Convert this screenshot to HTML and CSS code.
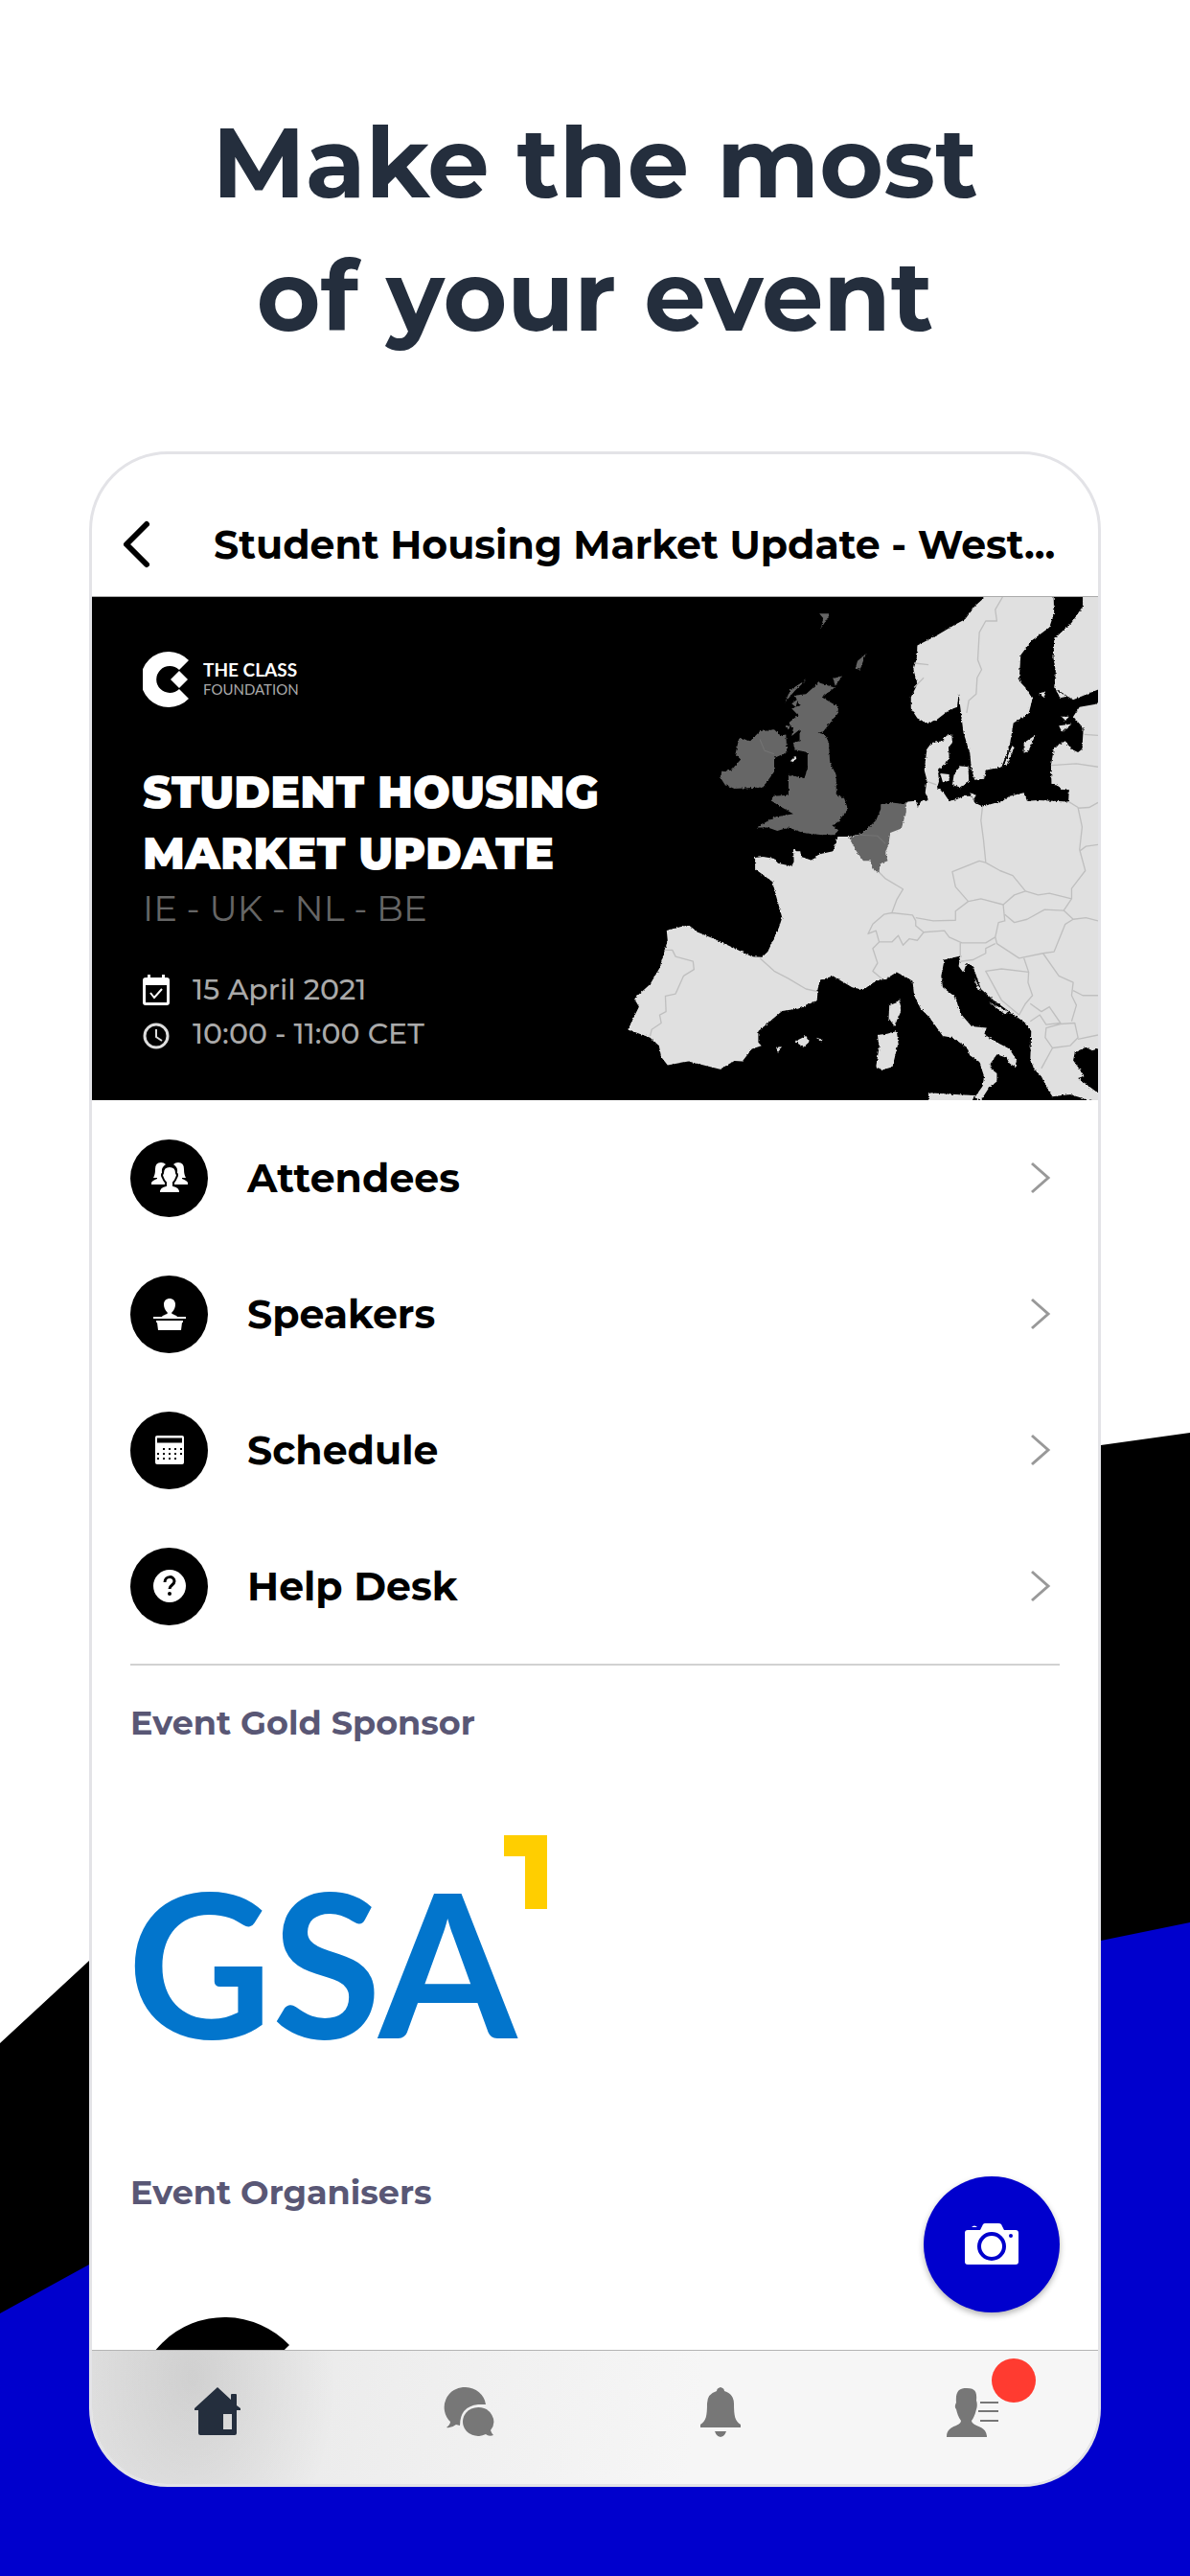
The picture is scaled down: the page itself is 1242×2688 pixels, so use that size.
FILE: index.html
```html
<!DOCTYPE html>
<html lang="en">
<head>
    <meta charset="UTF-8">
    <meta name="viewport" content="width=device-width, initial-scale=1.0">
    <title>Make the most of your event</title>
    <link rel="stylesheet" href="styles.css">
</head>
<body>
<div class="page">
    <!-- background waves -->
    <svg class="waves" viewBox="0 0 1242 2688" preserveAspectRatio="none" aria-hidden="true">
        <path fill="#000" d="M0 2132L93 2046Q520 1620 1149 1508L1242 1495V2688H0Z"/>
        <path fill="#0000cd" d="M0 2414L93 2363Q560 2130 1149 2025L1242 2006V2688H0Z"/>
    </svg>

    <h1 class="headline">Make the most<br>of your event</h1>

    <div class="phone">
        <header class="topbar">
            <button class="back" type="button" aria-label="Back">
                <svg width="34" height="54" viewBox="0 0 34 54"><path d="M27 6L6 27L27 48" fill="none" stroke="#000" stroke-width="6" stroke-linecap="round" stroke-linejoin="round"/></svg>
            </button>
            <h2 class="title">Student Housing Market Update - West...</h2>
        </header>

        <main class="content">
            <section class="banner">
                <div class="info">
                    <div class="logo">
                        <svg width="50" height="58" viewBox="0 0 50 58"><path fill="#fff" d="M48 9A29 29 0 1 0 48 49L38 39A14 14 0 1 1 38 19Z"/><path fill="#fff" d="M38 20L47 29L38 38L29 29Z"/></svg>
                        <p class="logo_txt"><b>THE CLASS</b><span>FOUNDATION</span></p>
                    </div>
                    <h3 class="event">STUDENT HOUSING<br>MARKET UPDATE</h3>
                    <p class="countries">IE - UK - NL - BE</p>
                    <ul class="when">
                        <li>
                            <svg width="28" height="32" viewBox="0 0 28 32"><path fill="#fff" fill-rule="evenodd" d="M5 0h3v3h12V0h3v3h2a3 3 0 0 1 3 3v23a3 3 0 0 1-3 3H3a3 3 0 0 1-3-3V6a3 3 0 0 1 3-3h2zM3 11v18h22V11z"/><path d="M8 19l4 5 8-9" fill="none" stroke="#fff" stroke-width="2"/></svg>
                            15 April 2021
                        </li>
                        <li>
                            <svg width="28" height="32" viewBox="0 0 28 32"><circle cx="14" cy="18" r="12" fill="none" stroke="#ddd" stroke-width="3"/><path d="M14 11v8l6 4" fill="none" stroke="#ddd" stroke-width="2"/></svg>
                            10:00 - 11:00 CET
                        </li>
                    </ul>
                </div>
                <!-- map of western europe -->
                <svg class="map" viewBox="0 11 1518 1552" preserveAspectRatio="none" aria-hidden="true">
                    <filter id="coast" x="0" y="0" width="100%" height="100%">
                        <feTurbulence type="fractalNoise" baseFrequency="0.14" numOctaves="2" seed="4"/>
                        <feDisplacementMap in="SourceGraphic" scale="9" xChannelSelector="R" yChannelSelector="G"/>
                    </filter>
                    <g filter="url(#coast)">
                        <g fill="#e0e0e0">
                            <path d="M440 815L465 812 500 818 512 832 540 838 556 842 562 825 560 788 570 795 582 795 585 812 620 824 640 805 685 795 692 775 700 750 735 750 775 742 820 705 840 670 860 660 912 650 920 642 945 640 952 660 962 640 985 638 975 615 980 575 972 545 980 480 995 460 1030 455 1042 438 1058 435 1060 460 1048 475 1050 505 1040 525 1015 545 1018 580 1012 600 1030 610 1050 640 1075 635 1095 625 1120 625 1130 645 1155 657 1218 640 1240 625 1285 615 1295 640 1330 638 1425 642 1427 605 1405 605 1390 592 1372 590 1370 530 1380 475 1415 455 1435 480 1455 490 1468 480 1472 415 1440 380 1460 350 1530 338 1530 1400 1500 1410 1480 1400 1445 1415 1440 1440 1475 1488 1455 1495 1530 1550 1530 1575 1430 1545 1375 1552 1360 1530 1340 1490 1320 1470 1305 1440 1308 1350 1290 1325 1240 1290 1190 1255 1150 1220 1125 1150 1105 1140 1095 1170 1080 1150 1085 1118 1035 1130 1025 1180 1030 1215 1070 1245 1085 1295 1120 1335 1168 1340 1160 1360 1200 1385 1240 1405 1262 1440 1258 1460 1240 1450 1230 1432 1200 1422 1180 1450 1180 1465 1200 1480 1200 1505 1175 1525 1150 1563 1130 1555 1155 1520 1160 1490 1145 1445 1115 1425 1105 1400 1060 1370 1030 1365 990 1310 960 1280 940 1240 935 1195 885 1168 850 1190 820 1195 780 1222 745 1215 685 1180 645 1192 637 1220 635 1255 580 1280 525 1288 450 1350 450 1385 460 1395 430 1405 400 1443 375 1442 330 1468 230 1443 165 1455 145 1430 138 1395 110 1370 40 1345 75 1275 60 1250 110 1205 140 1155 165 1070 162 1040 230 1022 260 1045 310 1065 370 1092 430 1120 462 1122 480 1105 515 1030 525 1000 505 930 495 890 440 850Z"/>
                            <path d="M1175 0L1130 40 1100 80 1070 95 1010 130 950 160 948 200 938 235 950 280 930 320 930 355 950 385 980 400 1010 390 1050 360 1075 350 1080 310 1085 350 1095 430 1115 490 1120 540 1130 575 1160 572 1165 545 1215 535 1240 470 1252 400 1300 370 1312 325 1290 290 1270 270 1275 190 1310 145 1365 105 1380 60 1378 0Z"/>
                            <path d="M1470 0L1470 40 1435 90 1380 140 1378 200 1385 240 1380 290 1440 328 1530 292V0Z"/>
                            <path d="M1065 560L1085 532 1110 535 1112 580 1085 600 1060 590ZM1022 555L1050 558 1050 578 1030 582ZM1285 460L1320 438 1300 485 1285 492ZM1248 470L1255 475 1230 532 1222 530ZM895 1250L898 1290 878 1335 860 1310 862 1270 885 1262ZM885 1350L890 1385 872 1460 840 1470 820 1460 830 1400 825 1362 855 1358ZM565 1382L600 1365 612 1382 592 1400ZM632 1370L652 1376 648 1384ZM506 1400L524 1398 512 1415ZM985 1540L1070 1545 1130 1548 1118 1575 985 1575ZM1395 408L1435 403 1405 428ZM1403 380L1427 380 1416 392ZM1330 308L1352 302 1350 322ZM1385 298L1420 318 1400 322ZM1115 615L1135 622 1128 638ZM1130 1185L1150 1225 1140 1222ZM1175 1260L1235 1290 1225 1298Z"/>
                        </g>
                        <g fill="#666">
                            <path d="M640 275L690 290 650 320 702 350 700 370 655 425 640 430 660 435 672 460 675 520 695 560 695 620 720 632 732 665 700 705 682 715 702 730 690 745 650 745 590 738 545 722 510 732 480 722 445 722 500 690 560 680 515 655 492 640 495 625 545 622 545 560 595 570 605 540 605 490 565 482 560 460 580 455 580 420 555 440 560 415 545 400 575 375 555 355 580 345 565 315 600 310Z"/>
                            <path d="M455 425L500 420 520 438 537 435 540 490 500 508 500 550 465 598 375 602 345 590 332 570 335 548 365 545 395 512 378 495 390 445 425 455Z"/>
                            <path d="M735 752L775 742 820 700 835 665 835 650 870 645 915 650 915 675 900 725 865 738 860 770 850 800 857 825 832 835 830 860 815 855 800 825 780 825 755 790Z"/>
                            <path d="M602 265L565 300 535 335 550 298ZM788 186L770 235 755 232 762 208ZM685 262L714 255 692 285ZM555 340L575 325 568 350ZM535 410L552 408 545 420ZM642 62L676 62 664 82 648 106 654 76Z"/>
                        </g>
                        <path fill="#e0e0e0" d="M552 515L568 502 570 510 558 520Z"/>
                    </g>
                    <g fill="none" stroke="#bfbfbf" stroke-width="4" stroke-linejoin="round">
                        <path d="M1218 11L1195 50 1200 85 1165 85 1145 120 1140 205 1152 235 1138 260 1135 310 1112 330 1105 368"/>
                        <path d="M155 1100L180 1100 190 1120 245 1135 248 1160 215 1180 190 1235 158 1242 160 1290 140 1300 145 1325 115 1345 110 1365"/>
                        <path d="M455 1125L500 1165 545 1188 600 1220 637 1228"/>
                        <path d="M830 860L850 880 905 912 885 945 870 985 935 992 945 1010 945 1025 970 1045 950 1070 925 1065 905 1085 890 1055 870 1075 830 1075 820 1040 795 1050 810 1020 845 990 870 985M830 1075L810 1095 825 1140 810 1165 840 1190"/>
                        <path d="M1155 657L1150 700 1158 760 1165 828M1145 825L1060 858 1070 905 1110 950 1150 942 1220 960 1255 930 1290 918 1250 870 1210 855 1165 830ZM1110 950L1070 980 1070 1008 1000 1010 945 1000"/>
                        <path d="M970 1045L1035 1040 1050 1060 1090 1078 1165 1078 1195 1060 1205 1015 1225 1010 1220 960M1225 990L1255 1015 1295 1005 1350 975 1410 978 1435 942 1365 925 1330 930 1290 918"/>
                        <path d="M1195 1060L1200 1080 1270 1125 1345 1110 1380 1105 1415 1020 1440 1005 1410 978M1425 642L1455 660 1468 720 1460 790 1478 855 1435 910 1435 942M1440 1005L1480 1000 1518 1010M1518 775L1480 780 1460 795M1370 530L1450 525 1518 535M1455 662L1490 660 1518 645M1475 435L1518 438"/>
                        <path d="M1085 1118L1085 1078M1085 1135L1125 1130 1165 1110 1165 1095 1195 1080M1270 1300L1215 1255 1165 1165 1215 1158 1300 1168 1298 1200 1312 1240 1290 1265ZM1285 1125L1300 1168M1345 1110L1395 1180 1440 1200 1435 1240 1450 1270 1435 1320M1440 1225L1470 1240 1518 1240"/>
                        <path d="M1305 1265L1340 1290 1365 1275 1400 1325 1355 1330 1335 1300 1305 1320M1355 1340L1400 1328 1445 1325 1455 1370 1430 1395 1375 1402 1352 1370ZM1455 1375L1518 1362M1375 1402L1340 1465M940 215L985 220M940 290L970 260M980 580L1010 590"/>
                    </g>
                    <g fill="none" stroke="#747474" stroke-width="3">
                        <path d="M455 450L470 485 500 495M770 745L825 748 850 772"/>
                    </g>
                </svg>
            </section>

            <nav class="menu">
                <a class="row" href="#">
                    <span class="ico"><svg width="40" height="34" viewBox="0 0 40 34"><path fill="#fff" d="M1 24v-2q1-2 6-4v-1H3q2-3 2-9Q5 1 11 1q3 0 5 2q-5 3-4 9q0 4 3 7v5zM39 24v-2q-1-2-6-4v-1h4q-2-3-2-9q0-7-6-7q-3 0-5 2q5 3 4 9q0 4-3 7v5z"/><path fill="#fff" stroke="#000" stroke-width="2" d="M9 33q-1-6 7-8v-3q-2-2-3-5q-2-3 0-5q0-7 7-7t7 7q2 2 0 5q-1 3-3 5v3q8 2 7 8z"/></svg></span>
                    <span class="name">Attendees</span>
                    <svg class="arrow" width="22" height="34" viewBox="0 0 22 34"><path d="M2 2L19 17L2 32"/></svg>
                </a>
                <a class="row" href="#">
                    <span class="ico"><svg width="40" height="34" viewBox="0 0 40 34"><path fill="#fff" d="M3 20h9c1-2 5-2 6-4c-3-3-4-6-4-9c0-8 12-8 12 0c0 3-1 6-4 9c1 2 5 2 6 4h9v2H3zM6 24h28v2h-1l-1 8H8L7 26H6z"/></svg></span>
                    <span class="name">Speakers</span>
                    <svg class="arrow" width="22" height="34" viewBox="0 0 22 34"><path d="M2 2L19 17L2 32"/></svg>
                </a>
                <a class="row" href="#">
                    <span class="ico"><svg width="40" height="34" viewBox="0 0 40 34"><rect x="5" y="2" width="30" height="30" rx="2" fill="#fff"/><path d="M7 7h26" stroke="#000" stroke-width="5"/><path d="M13 16h21M7 21h27M7 26h22" stroke="#000" stroke-width="2" stroke-dasharray="2 4"/></svg></span>
                    <span class="name">Schedule</span>
                    <svg class="arrow" width="22" height="34" viewBox="0 0 22 34"><path d="M2 2L19 17L2 32"/></svg>
                </a>
                <a class="row" href="#">
                    <span class="ico"><svg width="40" height="34" viewBox="0 0 40 34"><circle cx="20" cy="17" r="17" fill="#fff"/><path d="M15 13c0-7 10-7 10-1c0 4-5 4-5 8" fill="none" stroke="#000" stroke-width="3"/><circle cx="20" cy="25" r="2"/></svg></span>
                    <span class="name">Help Desk</span>
                    <svg class="arrow" width="22" height="34" viewBox="0 0 22 34"><path d="M2 2L19 17L2 32"/></svg>
                </a>
            </nav>

            <section class="sponsor">
                <h3 class="label">Event Gold Sponsor</h3>
                <svg class="gsa" width="436" height="220" viewBox="0 0 436 220">
                    <text x="-5" y="213">GSA</text>
                    <path fill="#ffce00" d="M388 1h45v77h-23V23h-22z"/>
                </svg>
            </section>

            <section class="organiser">
                <h3 class="label">Event Organisers</h3>
                <svg width="190" height="190" viewBox="0 0 190 190"><path d="M164 29A93 93 0 1 0 164 157L131 125A45 45 0 1 1 131 61Z"/><path d="M131 64L160 93L131 122L102 93Z"/></svg>
            </section>

            <button class="fab" type="button" aria-label="Camera">
                <svg width="58" height="46" viewBox="0 0 58 46"><path fill="#fff" d="M1 11a3 3 0 0 1 3-3h13l3-6q1-1 2-1h14q2 0 3 1l3 6h12a3 3 0 0 1 3 3v30a3 3 0 0 1-3 3H4a3 3 0 0 1-3-3zM8 5q3-3 6 0z"/><circle cx="29" cy="25" r="13" fill="none" stroke="#0000cd" stroke-width="4"/><circle cx="49" cy="14" r="2" fill="#0000cd"/></svg>
            </button>
        </main>

        <nav class="tabs">
            <a href="#" class="tab" aria-label="Home">
                <svg width="50" height="52" viewBox="0 0 50 52"><path fill="#242e3d" fill-rule="evenodd" d="M25 0L39 13V8q0-1 1-1h4q1 0 1 1v11l4 3v2h-4v24q0 2-2 2H7q-2 0-2-2V24H1v-2zM31 28v16h9V28z"/></svg>
            </a>
            <a href="#" class="tab" aria-label="Messages">
                <svg width="54" height="52" viewBox="0 0 54 52"><path fill="#777" d="M23 0a21 21 0 0 0-16 36q0 3-4 6q5 1 10-3l4 1Q17 20 36 18l8 0A22 21 0 0 0 23 0z"/><path fill="#777" d="M36 21a16 15 0 1 0 8 28q4 3 8 1q-2-2-3-5A16 15 0 0 0 36 21z"/></svg>
            </a>
            <a href="#" class="tab" aria-label="Notifications">
                <svg width="44" height="52" viewBox="0 0 44 52"><path fill="#777" d="M22 0q4 1 4 4q10 3 10 13c0 13 1 18 7 22v3H1v-3c6-4 7-9 7-22q0-10 10-13q0-3 4-4zM16 46h12q-2 6-6 6t-6-6z"/></svg>
            </a>
            <a href="#" class="tab" aria-label="Profile">
                <svg width="56" height="52" viewBox="0 0 56 52"><path fill="#777" d="M1 52c0-13 14-10 15-17c-3-4-4-8-5-12c-2-2-1-5 0-7C10 4 14 1 22 1s11 3 10 13c1 2 1 7 0 9c-1 4-2 8-5 12c1 7 16 4 16 17z"/><path d="M36 16h19M34 25h21M36 35h19" stroke="#777" stroke-width="2"/></svg>
                <span class="dot"></span>
            </a>
        </nav>
    </div>
</div>
</body>
</html>
```

FILE: styles.css
```css
*{
    margin: 0;
    padding: 0;
    box-sizing: border-box;
}
body{
    font-family: Montserrat, Inter, "Liberation Sans", sans-serif;
    background-color: #fff;
    color: #000;
}
ul{
    list-style: none;
}
a{
    text-decoration: none;
    color: inherit;
}
button{
    border: none;
    background: none;
}
svg{
    display: block;
}
.page{
    position: relative;
    display: flex;
    flex-direction: column;
    height: 100vh;
    padding: 100px 93px 93px;
    overflow: hidden;
}
.waves{
    position: absolute;
    top: 0;
    left: 0;
    width: 100%;
    height: 100%;
}
.headline{
    position: relative;
    text-align: center;
    font-size: 102px;
    line-height: 139px;
    font-weight: 700;
    color: #242e3d;
    margin-bottom: 93px;
}

/* phone card */
.phone{
    position: relative;
    flex: 1;
    min-height: 0;
    display: flex;
    flex-direction: column;
    border: 3px solid #e3e3e7;
    border-radius: 82px;
    background-color: #fff;
    overflow: hidden;
}
.topbar{
    display: flex;
    align-items: center;
    gap: 63px;
    padding: 64px 30px 24px;
    border-bottom: 1px solid #aaa;
}
.back{
    height: 60px;
}
.title{
    font-size: 41px;
    line-height: 60px;
    font-weight: 700;
    white-space: nowrap;
}
.content{
    position: relative;
    flex: 1;
    min-height: 0;
    overflow: hidden;
}

/* banner */
.banner{
    display: flex;
    aspect-ratio: 2 / 1;
    background-color: #000;
    color: #fff;
}
.info{
    flex: 1;
    min-width: 0;
    padding: 57px 0 0 53px;
    white-space: nowrap;
}
.map{
    width: 48%;
    height: 100%;
}
.logo{
    display: flex;
    align-items: center;
    gap: 13px;
}
.logo_txt{
    display: flex;
    flex-direction: column;
    font-family: Lato, sans-serif;
    font-size: 19px;
    line-height: 20px;
}
.logo_txt span{
    font-size: 15px;
    color: #aaa;
}
.event{
    margin-top: 57px;
    font-size: 46px;
    line-height: 64px;
    font-weight: 900;
}
.countries{
    font-size: 37px;
    line-height: 50px;
    color: #666;
}
.when{
    margin-top: 37px;
    font-size: 30px;
    line-height: 46px;
    font-weight: 500;
    color: #aaa;
}
.when li{
    display: flex;
    align-items: center;
    gap: 24px;
}

/* menu */
.menu{
    margin: 0 40px;
    padding: 10px 0;
    border-bottom: 2px solid #d2d2d2;
}
.row{
    display: flex;
    align-items: center;
    gap: 41px;
    height: 142px;
}
.ico{
    display: flex;
    align-items: center;
    justify-content: center;
    width: 81px;
    height: 81px;
    border-radius: 50%;
    background-color: #000;
}
.name{
    flex: 1;
    font-size: 41px;
    line-height: 60px;
    font-weight: 700;
}
.arrow{
    margin-right: 9px;
    fill: none;
    stroke: #999;
    stroke-width: 3;
}

/* sponsors */
.label{
    font-size: 35px;
    line-height: 44px;
    font-weight: 700;
    color: #595775;
}
.sponsor,
.organiser{
    padding: 38px 40px 0;
}
.gsa{
    margin: 94px 0 94px 2px;
    overflow: visible;
    font-family: Lato, sans-serif;
    font-size: 208px;
    font-weight: 700;
    fill: #0275cc;
}
.organiser svg{
    margin: 108px 0 0 2px;
}
.fab{
    position: absolute;
    right: 40px;
    bottom: 39px;
    width: 142px;
    height: 142px;
    display: flex;
    align-items: center;
    justify-content: center;
    border-radius: 50%;
    background-color: #0000cd;
    box-shadow: 0 3px 6px rgba(0,0,0,.3);
}

/* bottom tabs */
.tabs{
    display: flex;
    height: 140px;
    padding-top: 38px;
    border-top: 1px solid #b4b4b4;
    background:
        radial-gradient(ellipse 150px 220px at 10% 20%, rgba(0,0,0,.1), rgba(0,0,0,0)),
        linear-gradient(100deg, #e4e4e4, #eeeeee 30%, #f6f6f6 60%);
}
.tab{
    flex: 1;
    position: relative;
    display: flex;
    align-items: flex-start;
    justify-content: center;
}
.dot{
    position: absolute;
    top: -30px;
    left: calc(50% + 20px);
    width: 46px;
    height: 46px;
    border-radius: 50%;
    background-color: #ff3b30;
}
```
